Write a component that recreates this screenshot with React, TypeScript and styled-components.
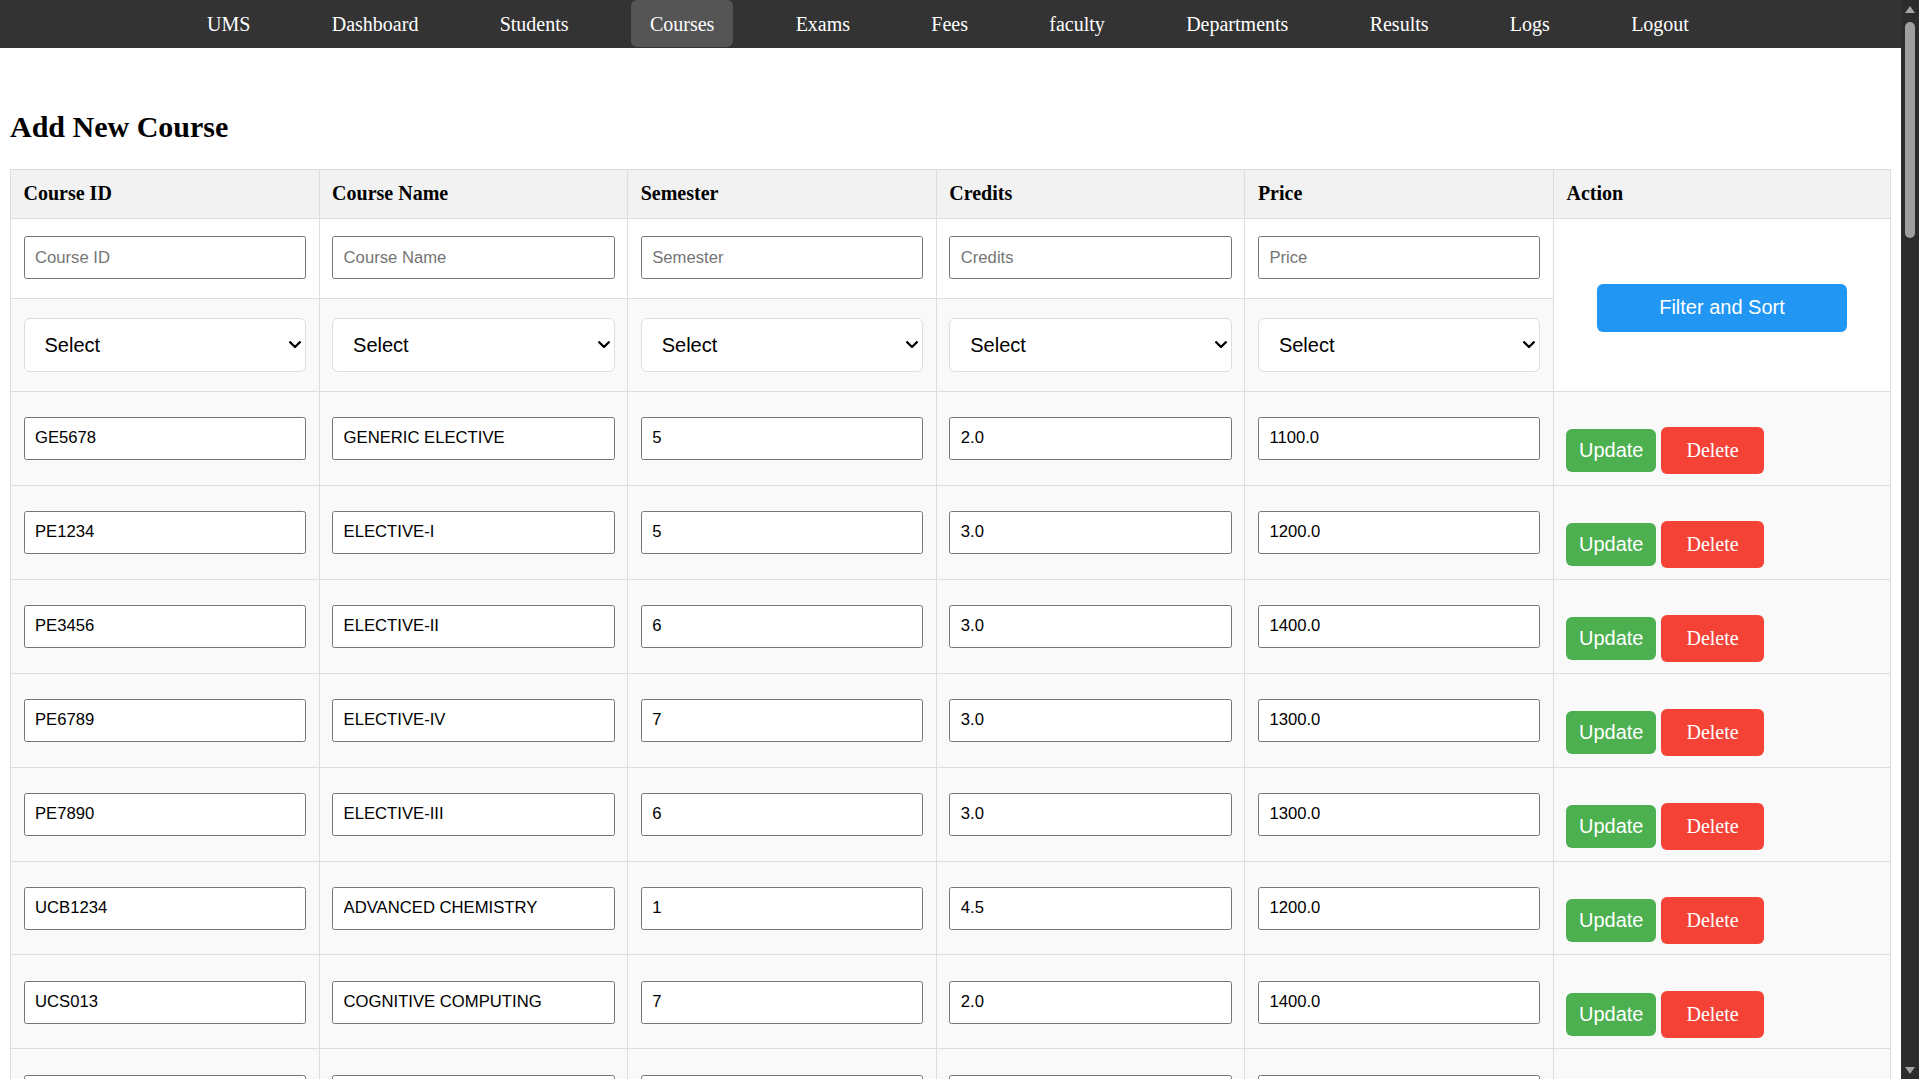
import React from "react";
import styled, { createGlobalStyle } from "styled-components";

const GlobalStyle = createGlobalStyle`
  html {
    scrollbar-width: none;
  }
  html, body {
    margin: 0;
    padding: 0;
    background: #ffffff;
  }
  body {
    font-family: "Liberation Serif", "Times New Roman", serif;
    font-size: 20px;
    color: #000;
  }
`;

const Page = styled.div`
  padding-right: 18px;
`;

const ScrollRail = styled.div`
  position: fixed;
  top: 0;
  right: 0;
  bottom: 0;
  width: 18px;
  background: #2c2c2c;
  display: flex;
  flex-direction: column;
  z-index: 10;
`;

const ScrollArrow = styled.div`
  height: 18px;
  display: flex;
  align-items: center;
  justify-content: center;
`;

const ScrollTrack = styled.div`
  flex: 1;
  padding: 4px 3.6px;
`;

const ScrollThumb = styled.div`
  height: 216px;
  border-radius: 6px;
  background: #9f9f9f;
`;

const NavBar = styled.nav`
  height: 48px;
  background: #333333;
  display: flex;
  justify-content: center;
  align-items: flex-start;
  gap: 43.8px;
  padding-right: 5px;
`;

const NavLink = styled.a<{ $active?: boolean }>`
  display: block;
  box-sizing: border-box;
  height: 47px;
  padding: 13px 18.75px 0;
  color: #ffffff;
  text-decoration: none;
  font-family: "Liberation Serif", "Times New Roman", serif;
  font-size: 20px;
  line-height: 23px;
  border-radius: 6px;
  background: ${(p) => (p.$active ? "#555555" : "transparent")};
  white-space: nowrap;
`;

const Main = styled.main`
  padding: 62.4px 10px 40px;
`;

const Heading = styled.h2`
  margin: 0 0 24px;
  font-size: 30px;
  line-height: 34.5px;
  font-weight: bold;
`;

const Table = styled.table`
  width: 100%;
  border-collapse: collapse;
  table-layout: fixed;
`;

const Col = styled.col<{ $w?: number }>`
  width: ${(p) => (p.$w ? `${p.$w}px` : "auto")};
`;

const HeadCell = styled.th`
  border: 1px solid #dddddd;
  background: #f2f2f2;
  padding: 12.5px;
  text-align: left;
  font-size: 20px;
  line-height: 23px;
  font-weight: bold;
`;

const Row = styled.tr<{ $shade?: boolean }>`
  background: ${(p) => (p.$shade ? "#f9f9f9" : "#ffffff")};
`;

const Cell = styled.td<{ $kind: "filter" | "sort" | "data" | "action" }>`
  border: 1px solid #dddddd;
  vertical-align: top;
  padding: ${(p) =>
    p.$kind === "filter"
      ? "17.5px 12.5px 18.5px"
      : p.$kind === "sort"
      ? "19.5px 12.5px 18.2px"
      : p.$kind === "action"
      ? "35.5px 12.5px 0"
      : "25.3px 12.5px 24.7px"};
`;

const FilterActionCell = styled.td`
  border: 1px solid #dddddd;
  background: #ffffff;
  vertical-align: middle;
  text-align: center;
  padding: 12.5px;
`;

const TextInput = styled.input`
  display: block;
  box-sizing: border-box;
  width: 100%;
  height: 43px;
  margin: 0;
  padding: 0 10.5px;
  border: 1px solid #767676;
  border-radius: 2.5px;
  background: #ffffff;
  color: #000000;
  font-family: "Liberation Sans", Arial, sans-serif;
  font-size: 16.67px;
  outline: none;
  &::placeholder {
    color: #757575;
  }
`;

const SelectWrap = styled.div`
  position: relative;
`;

const SelectBox = styled.select`
  display: block;
  box-sizing: border-box;
  width: 100%;
  height: 54px;
  margin: 0;
  padding: 0 20px;
  appearance: none;
  -webkit-appearance: none;
  border: 1px solid #dddddd;
  border-radius: 6px;
  background: #ffffff;
  color: #000000;
  font-family: "Liberation Sans", Arial, sans-serif;
  font-size: 20px;
  outline: none;
`;

const Chevron = styled.svg`
  position: absolute;
  right: 5px;
  top: 50%;
  margin-top: -4px;
  width: 12px;
  height: 8px;
  pointer-events: none;
`;

const FilterButton = styled.button`
  width: 250px;
  height: 48px;
  margin-top: 6px;
  border: none;
  border-radius: 6px;
  background: #2196f3;
  color: #ffffff;
  font-family: "Liberation Sans", Arial, sans-serif;
  font-size: 20px;
  cursor: pointer;
`;

const ActionGroup = styled.div`
  display: flex;
  align-items: center;
  gap: 5.5px;
`;

const ActionButton = styled.button<{ $variant: "update" | "delete" }>`
  box-sizing: border-box;
  border: none;
  border-radius: 6px;
  color: #ffffff;
  font-size: 20px;
  cursor: pointer;
  height: ${(p) => (p.$variant === "update" ? "43px" : "47px")};
  padding: ${(p) => (p.$variant === "update" ? "0 12.5px" : "0 25px")};
  background: ${(p) => (p.$variant === "update" ? "#4caf50" : "#f44336")};
  font-family: ${(p) =>
    p.$variant === "update"
      ? '"Liberation Sans", Arial, sans-serif'
      : '"Liberation Serif", "Times New Roman", serif'};
`;

const navItems = [
  "UMS",
  "Dashboard",
  "Students",
  "Courses",
  "Exams",
  "Fees",
  "faculty",
  "Departments",
  "Results",
  "Logs",
  "Logout",
];

const columns = ["Course ID", "Course Name", "Semester", "Credits", "Price"];

type Course = [string, string, string, string, string];

const courses: Course[] = [
  ["GE5678", "GENERIC ELECTIVE", "5", "2.0", "1100.0"],
  ["PE1234", "ELECTIVE-I", "5", "3.0", "1200.0"],
  ["PE3456", "ELECTIVE-II", "6", "3.0", "1400.0"],
  ["PE6789", "ELECTIVE-IV", "7", "3.0", "1300.0"],
  ["PE7890", "ELECTIVE-III", "6", "3.0", "1300.0"],
  ["UCB1234", "ADVANCED CHEMISTRY", "1", "4.5", "1200.0"],
  ["UCS013", "COGNITIVE COMPUTING", "7", "2.0", "1400.0"],
  ["UCS301", "DATA STRUCTURES", "3", "4.0", "1500.0"],
  ["UCS303", "OPERATING SYSTEMS", "4", "4.0", "1500.0"],
  ["UCS310", "DATABASE MANAGEMENT SYSTEMS", "4", "4.0", "1500.0"],
  ["UCS405", "DISCRETE MATHEMATICS", "3", "3.5", "1300.0"],
  ["UCS411", "ARTIFICIAL INTELLIGENCE", "6", "4.0", "1600.0"],
  ["UCS414", "COMPUTER NETWORKS", "5", "4.0", "1500.0"],
  ["UCS415", "DESIGN AND ANALYSIS OF ALGORITHMS", "4", "4.0", "1500.0"],
  ["UCS503", "SOFTWARE ENGINEERING", "5", "4.0", "1400.0"],
  ["UCS510", "COMPUTER ARCHITECTURE", "5", "3.5", "1400.0"],
  ["UCS521", "MACHINE LEARNING", "6", "4.0", "1600.0"],
  ["UCS538", "DATA SCIENCE FUNDAMENTALS", "6", "3.0", "1300.0"],
  ["UCS617", "MICROPROCESSOR BASED SYSTEMS", "6", "4.0", "1500.0"],
  ["UCS619", "CLOUD COMPUTING", "7", "3.0", "1400.0"],
  ["UCS701", "THEORY OF COMPUTATION", "7", "3.5", "1300.0"],
  ["UCS702", "COMPILER CONSTRUCTION", "7", "4.0", "1500.0"],
  ["UCS802", "INFORMATION SECURITY", "8", "3.0", "1300.0"],
  ["UEC001", "ELECTRONIC ENGINEERING", "2", "4.5", "1200.0"],
  ["UEE001", "ELECTRICAL ENGINEERING", "1", "4.5", "1200.0"],
  ["UES012", "ENGINEERING MATERIALS", "2", "3.5", "1100.0"],
  ["UES013", "ENGINEERING DRAWING", "1", "4.0", "1100.0"],
  ["UHU003", "PROFESSIONAL COMMUNICATION", "1", "3.0", "1000.0"],
  ["UHU005", "HUMANITIES FOR ENGINEERS", "3", "3.0", "1000.0"],
  ["UMA003", "MATHEMATICS-I", "1", "3.5", "1100.0"],
  ["UMA004", "MATHEMATICS-II", "2", "3.5", "1100.0"],
  ["UMA035", "OPTIMIZATION TECHNIQUES", "4", "3.5", "1200.0"],
  ["UPH004", "APPLIED PHYSICS", "1", "4.5", "1200.0"],
  ["UTA013", "ENGINEERING DESIGN PROJECT-I", "2", "3.0", "1300.0"],
  ["UTA014", "ENGINEERING DESIGN PROJECT-II", "3", "3.0", "1300.0"],
  ["UTA015", "ENGINEERING DESIGN PROJECT-III", "4", "3.0", "1300.0"],
  ["UTA016", "INNOVATION AND ENTREPRENEURSHIP", "5", "2.0", "1100.0"],
  ["UTA017", "COMPUTER PROGRAMMING", "1", "4.0", "1200.0"],
  ["UTA018", "OBJECT ORIENTED PROGRAMMING", "2", "4.0", "1300.0"],
  ["UCS617A", "EMBEDDED SYSTEMS", "6", "3.0", "1400.0"],
  ["UCS740", "DEEP LEARNING", "7", "4.0", "1600.0"],
  ["UCS741", "NATURAL LANGUAGE PROCESSING", "8", "3.0", "1500.0"],
  ["UCS742", "COMPUTER VISION", "8", "3.0", "1500.0"],
  ["UCS743", "BIG DATA ANALYTICS", "7", "3.0", "1400.0"],
  ["UCS744", "BLOCKCHAIN TECHNOLOGY", "8", "3.0", "1400.0"],
  ["UCS745", "INTERNET OF THINGS", "6", "3.0", "1400.0"],
  ["UCS746", "HUMAN COMPUTER INTERACTION", "7", "2.0", "1200.0"],
  ["UCS747", "QUANTUM COMPUTING", "8", "3.0", "1600.0"],
  ["UCS748", "PARALLEL COMPUTING", "7", "3.0", "1400.0"],
  ["UCS749", "CAPSTONE PROJECT", "8", "4.0", "1800.0"],
];

const SelectField: React.FC = () => (
  <SelectWrap>
    <SelectBox defaultValue="">
      <option value="">Select</option>
      <option value="asc">Ascending</option>
      <option value="desc">Descending</option>
    </SelectBox>
    <Chevron viewBox="0 0 12 8">
      <polyline
        points="1.2,1.2 6,6 10.8,1.2"
        fill="none"
        stroke="#000"
        strokeWidth="2.3"
        strokeLinecap="round"
        strokeLinejoin="round"
      />
    </Chevron>
  </SelectWrap>
);

const ScrollBar: React.FC = () => (
  <ScrollRail aria-hidden="true">
    <ScrollArrow>
      <svg width="10" height="7" viewBox="0 0 10 7">
        <polygon points="5,0 10,7 0,7" fill="#a3a3a3" />
      </svg>
    </ScrollArrow>
    <ScrollTrack>
      <ScrollThumb />
    </ScrollTrack>
    <ScrollArrow>
      <svg width="10" height="7" viewBox="0 0 10 7">
        <polygon points="0,0 10,0 5,7" fill="#a3a3a3" />
      </svg>
    </ScrollArrow>
  </ScrollRail>
);

export default function App() {
  return (
    <Page>
      <GlobalStyle />
      <ScrollBar />
      <NavBar>
        {navItems.map((item) => (
          <NavLink key={item} href="#" $active={item === "Courses"}>
            {item}
          </NavLink>
        ))}
      </NavBar>
      <Main>
        <Heading>Add New Course</Heading>
        <Table>
          <colgroup>
            <Col $w={308.6} />
            <Col $w={308.6} />
            <Col $w={308.6} />
            <Col $w={308.6} />
            <Col $w={308.6} />
            <Col />
          </colgroup>
          <thead>
            <tr>
              {columns.map((c) => (
                <HeadCell key={c}>{c}</HeadCell>
              ))}
              <HeadCell>Action</HeadCell>
            </tr>
          </thead>
          <tbody>
            <Row>
              {columns.map((c) => (
                <Cell key={c} $kind="filter">
                  <TextInput placeholder={c} />
                </Cell>
              ))}
              <FilterActionCell rowSpan={2}>
                <FilterButton>Filter and Sort</FilterButton>
              </FilterActionCell>
            </Row>
            <Row $shade>
              {columns.map((c) => (
                <Cell key={c} $kind="sort">
                  <SelectField />
                </Cell>
              ))}
            </Row>
            {courses.map((course) => (
              <Row $shade key={course[0]}>
                {course.map((v, i) => (
                  <Cell key={i} $kind="data">
                    <TextInput defaultValue={v} />
                  </Cell>
                ))}
                <Cell $kind="action">
                  <ActionGroup>
                    <ActionButton $variant="update">Update</ActionButton>
                    <ActionButton $variant="delete">Delete</ActionButton>
                  </ActionGroup>
                </Cell>
              </Row>
            ))}
          </tbody>
        </Table>
      </Main>
    </Page>
  );
}
